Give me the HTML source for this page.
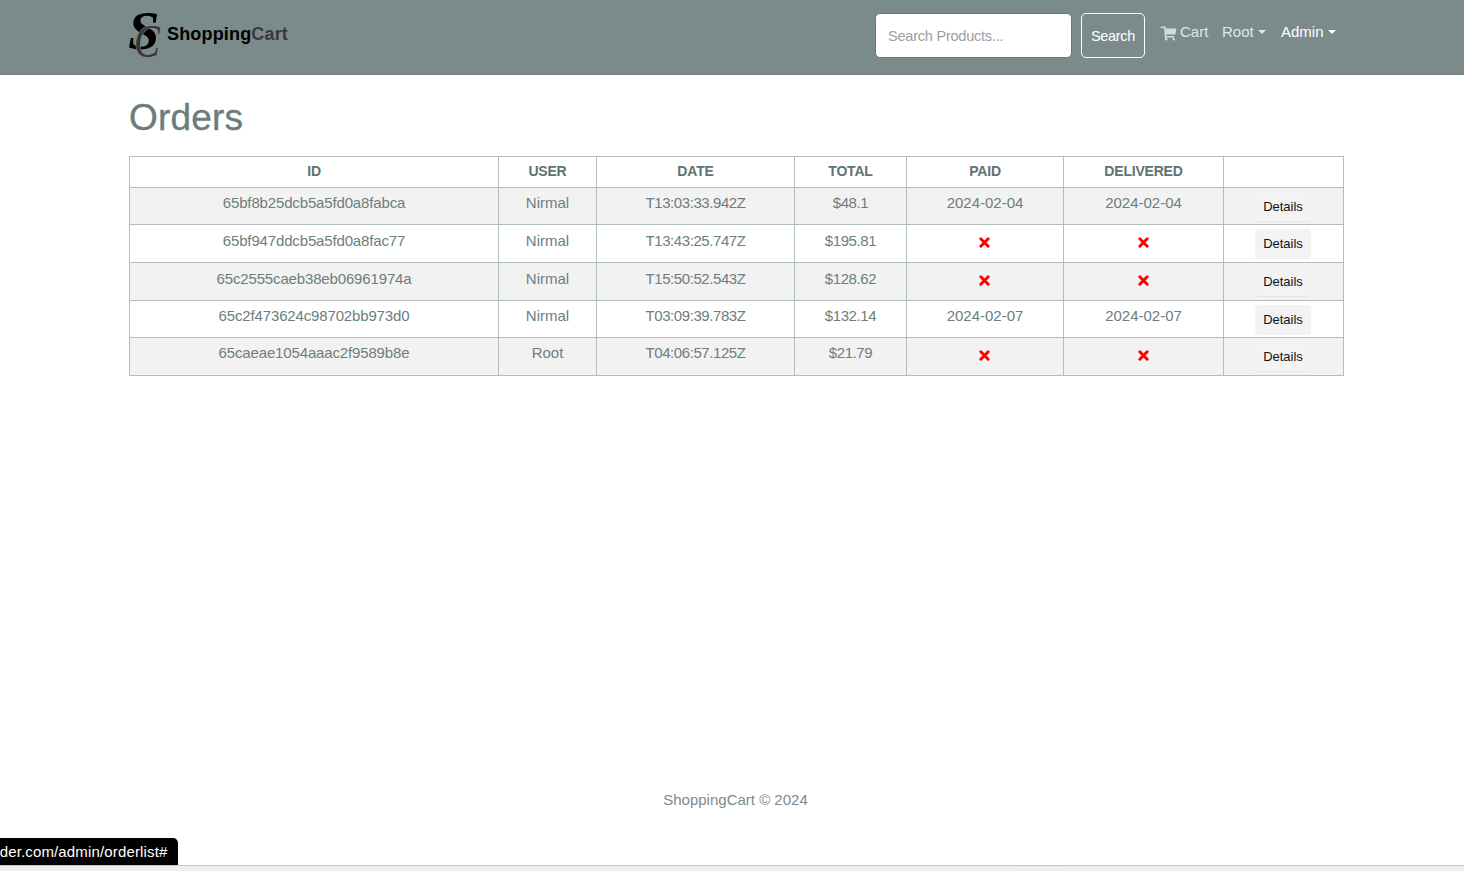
<!DOCTYPE html>
<html>
<head>
<meta charset="utf-8">
<style>
html,body{margin:0;padding:0;}
body{width:1464px;height:871px;overflow:hidden;position:relative;background:#fff;font-family:"Liberation Sans",sans-serif;color:#7b8a8b;}
.abs{position:absolute;white-space:nowrap;}
#nav{position:absolute;left:0;top:0;width:1464px;height:74px;background:#7b8a8b;border-bottom:1px solid #717f80;}
#brand{left:167px;top:23px;font-size:18px;font-weight:700;color:#000;line-height:22px;letter-spacing:0.17px;}
#brand span{color:#3b3838;}
#search{left:875px;top:13px;width:195px;height:43px;background:#fff;border:1px solid #66787a;border-radius:5px;}
#search span{position:absolute;left:12px;top:14px;font-size:14.5px;line-height:17px;color:#99a0a5;letter-spacing:-0.22px;}
#sbtn{left:1081px;top:13px;width:62px;height:43px;border:1px solid #fff;border-radius:5px;}
#sbtn span{position:absolute;left:9px;top:14px;font-size:14.5px;line-height:17px;color:#fff;letter-spacing:-0.35px;}
.nl{font-size:15px;line-height:17px;top:23px;color:rgba(255,255,255,.8);}
.caret{position:absolute;width:0;height:0;border-left:4px solid transparent;border-right:4px solid transparent;border-top:4px solid currentColor;}
#h1{left:129px;top:96px;font-size:37px;line-height:44px;color:#6c7c7d;letter-spacing:0.2px;-webkit-text-stroke:0.35px #6c7c7d;}
.hl{position:absolute;left:129px;width:1215px;height:1px;background:#b2bebe;}
.vl{position:absolute;top:156px;width:1px;height:220px;background:#b2bebe;}
.stripe{position:absolute;left:130px;width:1213px;background:#f2f2f2;}
.c{position:absolute;text-align:center;white-space:nowrap;}
.th{font-size:14px;font-weight:700;line-height:17px;color:#617273;letter-spacing:-0.2px;}
.td{font-size:15px;line-height:17px;color:#6e7d7e;}
.btn{position:absolute;left:1255px;width:56px;height:29px;background:#f3f3f3;border-radius:4px;box-shadow:0 1px 1px rgba(0,0,0,.06);}
.btn span{position:absolute;left:0;width:56px;top:7px;text-align:center;font-size:13px;line-height:15px;color:#111;}
.x{position:absolute;width:11px;height:11px;}
#foot{left:3.5px;width:1464px;top:790.5px;text-align:center;font-size:15px;line-height:17px;color:#7b8a8b;}
#status{left:0;top:838px;width:178px;height:27px;background:#000;border-top-right-radius:5px;}
#status span{position:absolute;right:10.5px;top:5px;font-size:15px;line-height:17px;color:#fff;letter-spacing:0.15px;}
#sb{position:absolute;left:0;top:865px;width:1464px;height:6px;background:#eeeeee;border-top:1px solid #c6c6c6;box-sizing:border-box;}
</style>
</head>
<body>
<div id="nav"></div>
<svg class="abs" style="left:0;top:0" width="300" height="74" viewBox="0 0 300 74">
  <text transform="translate(128,48.6) scale(1.05,1)" font-family="Liberation Serif" font-weight="700" font-style="italic" font-size="54" fill="#000">S</text>
  <text transform="translate(134,56.7) scale(0.84,1)" font-family="Liberation Serif" font-style="italic" font-size="46" fill="#3a3636" stroke="#7b8a8b" stroke-width="1" paint-order="stroke">C</text>
</svg>
<div class="abs" id="brand">Shopping<span>Cart</span></div>
<div class="abs" id="search"><span>Search Products...</span></div>
<div class="abs" id="sbtn"><span>Search</span></div>
<svg class="abs" style="left:1155px;top:20px" width="30" height="25" viewBox="0 0 30 25">
  <g fill="#d5dada">
  <rect x="5.6" y="6.6" width="4.6" height="1.6"/>
  <polygon points="9,6.6 10.6,6.6 11.6,19.5 10,19.5"/>
  <polygon points="10.2,8.4 21.2,8.4 20.4,14.6 10.7,14.6"/>
  <rect x="10.6" y="16" width="8.6" height="1.6"/>
  <circle cx="11.3" cy="19.2" r="1.2"/>
  <circle cx="18.8" cy="19.2" r="1.2"/>
  </g>
</svg>
<div class="abs nl" style="left:1180px;">Cart</div>
<div class="abs nl" style="left:1222px;">Root</div>
<div class="caret" style="left:1258px;top:30px;color:rgba(255,255,255,.8)"></div>
<div class="abs nl" style="left:1281px;color:#fff;">Admin</div>
<div class="caret" style="left:1328px;top:30px;color:#fff"></div>

<div class="abs" id="h1">Orders</div>

<!-- stripes -->
<div class="stripe" style="top:188px;height:36px"></div>
<div class="stripe" style="top:263px;height:37px"></div>
<div class="stripe" style="top:338px;height:37px"></div>

<!-- horizontal lines -->
<div class="hl" style="top:156px"></div>
<div class="hl" style="top:187px"></div>
<div class="hl" style="top:224px"></div>
<div class="hl" style="top:262px"></div>
<div class="hl" style="top:300px"></div>
<div class="hl" style="top:337px"></div>
<div class="hl" style="top:375px"></div>
<!-- vertical lines -->
<div class="vl" style="left:129px"></div>
<div class="vl" style="left:498px"></div>
<div class="vl" style="left:596px"></div>
<div class="vl" style="left:794px"></div>
<div class="vl" style="left:906px"></div>
<div class="vl" style="left:1063px"></div>
<div class="vl" style="left:1223px"></div>
<div class="vl" style="left:1343px"></div>

<!-- header -->
<div class="c th" style="left:130px;width:368px;top:163px">ID</div>
<div class="c th" style="left:499px;width:97px;top:163px">USER</div>
<div class="c th" style="left:597px;width:197px;top:163px">DATE</div>
<div class="c th" style="left:795px;width:111px;top:163px">TOTAL</div>
<div class="c th" style="left:907px;width:156px;top:163px">PAID</div>
<div class="c th" style="left:1064px;width:159px;top:163px">DELIVERED</div>

<!--ROWS-->
<div class="c td" style="left:130px;width:368px;top:194px;letter-spacing:-0.15px;">65bf8b25dcb5a5fd0a8fabca</div>
<div class="c td" style="left:499px;width:97px;top:194px;">Nirmal</div>
<div class="c td" style="left:597px;width:197px;top:194px;letter-spacing:-0.42px;">T13:03:33.942Z</div>
<div class="c td" style="left:795px;width:111px;top:194px;letter-spacing:-0.4px;">$48.1</div>
<div class="c td" style="left:907px;width:156px;top:194px;">2024-02-04</div>
<div class="c td" style="left:1064px;width:159px;top:194px;">2024-02-04</div>
<div class="btn" style="top:191.5px"><span>Details</span></div>
<div class="c td" style="left:130px;width:368px;top:232px;letter-spacing:-0.15px;">65bf947ddcb5a5fd0a8fac77</div>
<div class="c td" style="left:499px;width:97px;top:232px;">Nirmal</div>
<div class="c td" style="left:597px;width:197px;top:232px;letter-spacing:-0.42px;">T13:43:25.747Z</div>
<div class="c td" style="left:795px;width:111px;top:232px;letter-spacing:-0.4px;">$195.81</div>
<svg class="x" style="left:978.5px;top:237px" viewBox="0 0 11 11"><path d="M1.8 1.8L9.2 9.2M9.2 1.8L1.8 9.2" stroke="#f00" stroke-width="2.9" stroke-linecap="round"/></svg>
<svg class="x" style="left:1138.0px;top:237px" viewBox="0 0 11 11"><path d="M1.8 1.8L9.2 9.2M9.2 1.8L1.8 9.2" stroke="#f00" stroke-width="2.9" stroke-linecap="round"/></svg>
<div class="btn" style="top:229px"><span>Details</span></div>
<div class="c td" style="left:130px;width:368px;top:270px;letter-spacing:-0.15px;">65c2555caeb38eb06961974a</div>
<div class="c td" style="left:499px;width:97px;top:270px;">Nirmal</div>
<div class="c td" style="left:597px;width:197px;top:270px;letter-spacing:-0.42px;">T15:50:52.543Z</div>
<div class="c td" style="left:795px;width:111px;top:270px;letter-spacing:-0.4px;">$128.62</div>
<svg class="x" style="left:978.5px;top:275px" viewBox="0 0 11 11"><path d="M1.8 1.8L9.2 9.2M9.2 1.8L1.8 9.2" stroke="#f00" stroke-width="2.9" stroke-linecap="round"/></svg>
<svg class="x" style="left:1138.0px;top:275px" viewBox="0 0 11 11"><path d="M1.8 1.8L9.2 9.2M9.2 1.8L1.8 9.2" stroke="#f00" stroke-width="2.9" stroke-linecap="round"/></svg>
<div class="btn" style="top:267px"><span>Details</span></div>
<div class="c td" style="left:130px;width:368px;top:307px;letter-spacing:-0.15px;">65c2f473624c98702bb973d0</div>
<div class="c td" style="left:499px;width:97px;top:307px;">Nirmal</div>
<div class="c td" style="left:597px;width:197px;top:307px;letter-spacing:-0.42px;">T03:09:39.783Z</div>
<div class="c td" style="left:795px;width:111px;top:307px;letter-spacing:-0.4px;">$132.14</div>
<div class="c td" style="left:907px;width:156px;top:307px;">2024-02-07</div>
<div class="c td" style="left:1064px;width:159px;top:307px;">2024-02-07</div>
<div class="btn" style="top:305px"><span>Details</span></div>
<div class="c td" style="left:130px;width:368px;top:344px;letter-spacing:-0.15px;">65caeae1054aaac2f9589b8e</div>
<div class="c td" style="left:499px;width:97px;top:344px;">Root</div>
<div class="c td" style="left:597px;width:197px;top:344px;letter-spacing:-0.42px;">T04:06:57.125Z</div>
<div class="c td" style="left:795px;width:111px;top:344px;letter-spacing:-0.4px;">$21.79</div>
<svg class="x" style="left:978.5px;top:350px" viewBox="0 0 11 11"><path d="M1.8 1.8L9.2 9.2M9.2 1.8L1.8 9.2" stroke="#f00" stroke-width="2.9" stroke-linecap="round"/></svg>
<svg class="x" style="left:1138.0px;top:350px" viewBox="0 0 11 11"><path d="M1.8 1.8L9.2 9.2M9.2 1.8L1.8 9.2" stroke="#f00" stroke-width="2.9" stroke-linecap="round"/></svg>
<div class="btn" style="top:342px"><span>Details</span></div>
<!--/ROWS-->

<div class="abs" id="foot">ShoppingCart © 2024</div>
<div class="abs" id="status"><span>nder.com/admin/orderlist#</span></div>
<div id="sb"></div>
<div style="position:absolute;left:1020px;top:870px;width:44px;height:1px;background:#e6e6e6"></div>
</body>
</html>
